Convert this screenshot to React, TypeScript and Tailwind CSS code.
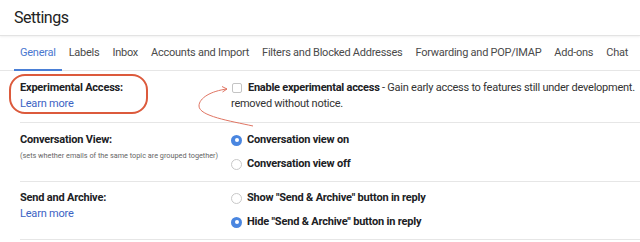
import React from "react";

const tabs = [
  "General",
  "Labels",
  "Inbox",
  "Accounts and Import",
  "Filters and Blocked Addresses",
  "Forwarding and POP/IMAP",
  "Add-ons",
  "Chat",
];

function Radio({ on }: { on?: boolean }) {
  return on ? (
    <span className="w-[11px] h-[11px] rounded-full bg-[#4a86e0] flex items-center justify-center shrink-0">
      <span className="w-[4px] h-[4px] rounded-full bg-white" />
    </span>
  ) : (
    <span className="w-[11px] h-[11px] rounded-full border border-[#c8c8c8] bg-white shrink-0" />
  );
}

export default function App() {
  return (
    <div
      className="relative w-[640px] h-[242px] overflow-hidden bg-white text-[#202124]"
      style={{ fontFamily: "Roboto, 'Noto Sans', sans-serif" }}
    >
      <div className="h-[36px] flex items-center pl-[14px] border-b border-[#e3e3e3] shadow-[0_1px_2px_rgba(0,0,0,0.06)]">
        <span className="text-[16px] tracking-[-0.5px] text-[#222]">Settings</span>
      </div>

      <div className="h-[35px] flex items-stretch pl-[14px] gap-[1px] border-b border-[#e6e6e6] whitespace-nowrap">
        {tabs.map((t, i) => (
          <div
            key={t}
            className={
              "relative flex items-center px-[6px] text-[11px] tracking-[-0.25px] " +
              (i === 0 ? "text-[#4a78cf]" : "text-[#4a4a4a]")
            }
          >
            {t}
            {i === 0 && (
              <span className="absolute left-0 right-0 bottom-[-1px] h-[2px] bg-[#4a7fd6]" />
            )}
          </div>
        ))}
      </div>

      <div className="ml-[20px] text-[11px] tracking-[-0.2px] leading-[16px]">
        <div className="flex border-b border-[#e6e6e6] pt-[9px] pb-[10px]">
          <div className="w-[211px] shrink-0">
            <div className="font-bold">Experimental Access:</div>
            <div className="text-[#3b63c4]">Learn more</div>
          </div>
          <div className="whitespace-nowrap text-[#333] tracking-[-0.25px]">
            <div className="flex items-center">
              <span className="w-[10px] h-[10px] ml-[1px] mr-[6px] rounded-[2px] border border-[#c4c4c4] bg-white shrink-0" />
              <span className="font-bold text-[#202124]">Enable experimental access</span>
              <span>&nbsp;- Gain early access to features still under development.</span>
            </div>
            <div>removed without notice.</div>
          </div>
        </div>

        <div className="flex border-b border-[#e6e6e6] pt-[9px] pb-[9px]">
          <div className="w-[211px] shrink-0">
            <div className="font-bold">Conversation View:</div>
            <div className="text-[7.3px] tracking-[0px] text-[#666] whitespace-nowrap">
              (sets whether emails of the same topic are grouped together)
            </div>
          </div>
          <div className="flex flex-col gap-[8px] font-bold whitespace-nowrap">
            <div className="flex items-center gap-[5px]">
              <Radio on />
              <span>Conversation view on</span>
            </div>
            <div className="flex items-center gap-[5px]">
              <Radio />
              <span>Conversation view off</span>
            </div>
          </div>
        </div>

        <div className="flex border-b border-[#e6e6e6] pt-[8px] pb-[9px]">
          <div className="w-[211px] shrink-0">
            <div className="font-bold">Send and Archive:</div>
            <div className="text-[#3b63c4]">Learn more</div>
          </div>
          <div className="flex flex-col gap-[8px] font-bold whitespace-nowrap">
            <div className="flex items-center gap-[5px]">
              <Radio />
              <span>Show "Send &amp; Archive" button in reply</span>
            </div>
            <div className="flex items-center gap-[5px]">
              <Radio on />
              <span>Hide "Send &amp; Archive" button in reply</span>
            </div>
          </div>
        </div>
      </div>

      {/* annotation overlay */}
      <div className="absolute left-[9px] top-[74px] w-[139px] h-[40px] rounded-[16px] border-2 border-[#dc5a3c] pointer-events-none" />
      <svg
        className="absolute left-0 top-0 pointer-events-none"
        width="640"
        height="242"
        viewBox="0 0 640 242"
      >
        <path
          d="M227 89 C211 91 199 98 199 106 C199 116 230 121 253 126"
          fill="none"
          stroke="#e07563"
          strokeWidth="1"
        />
        <path d="M222 86.5 L227 89 L222.5 92" fill="none" stroke="#e07563" strokeWidth="1" />
      </svg>
    </div>
  );
}
